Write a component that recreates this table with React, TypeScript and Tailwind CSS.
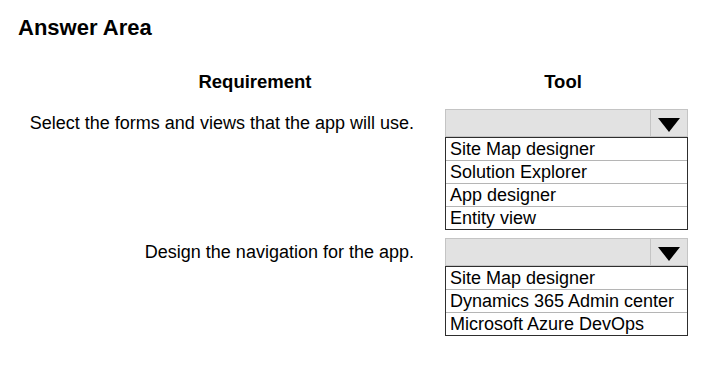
type Question = {
  label: string
  options: string[]
}

const questions: Question[] = [
  {
    label: 'Select the forms and views that the app will use.',
    options: [
      'Site Map designer',
      'Solution Explorer',
      'App designer',
      'Entity view',
    ],
  },
  {
    label: 'Design the navigation for the app.',
    options: [
      'Site Map designer',
      'Dynamics 365 Admin center',
      'Microsoft Azure DevOps',
    ],
  },
]

function Dropdown({ options }: { options: string[] }) {
  return (
    <div className="w-[243px]">
      <div className="flex h-[28px] border border-[#c4c4c4] bg-[#e2e2e2]">
        <div className="flex-1" />
        <div className="flex w-[37px] items-center justify-center border-l border-[#c4c4c4] pt-[3px]">
          <svg width="22" height="14" viewBox="0 0 22 14">
            <path d="M0 0 H22 L11 14 Z" fill="#000" />
          </svg>
        </div>
      </div>
      <ul className="border border-[#2e2e2e]">
        {options.map((o, i) => (
          <li
            key={o}
            className={
              'pl-[4px] pt-[1px] text-[18px] leading-[21px] ' +
              (i < options.length - 1 ? 'border-b border-[#b5b5b5]' : '')
            }
          >
            {o}
          </li>
        ))}
      </ul>
    </div>
  )
}

export default function App() {
  return (
    <div className="h-[381px] w-[725px] bg-white font-['Liberation_Sans',Arial,sans-serif] text-black">
      <h1 className="pl-[18px] pt-[15px] text-[22px] font-bold leading-[26px]">
        Answer Area
      </h1>

      <div className="mt-[30px] flex gap-[31px] text-[18.5px] font-bold leading-[22px]">
        <div className="w-[414px] pl-[96px] text-center">Requirement</div>
        <div className="w-[243px] pr-[7px] text-center">Tool</div>
      </div>

      <div className="mt-[16px] flex flex-col gap-[8px]">
        {questions.map((q) => (
          <div key={q.label} className="flex gap-[31px]">
            <p className="w-[414px] text-right text-[18px] leading-[28px]">
              {q.label}
            </p>
            <Dropdown options={q.options} />
          </div>
        ))}
      </div>
    </div>
  )
}
